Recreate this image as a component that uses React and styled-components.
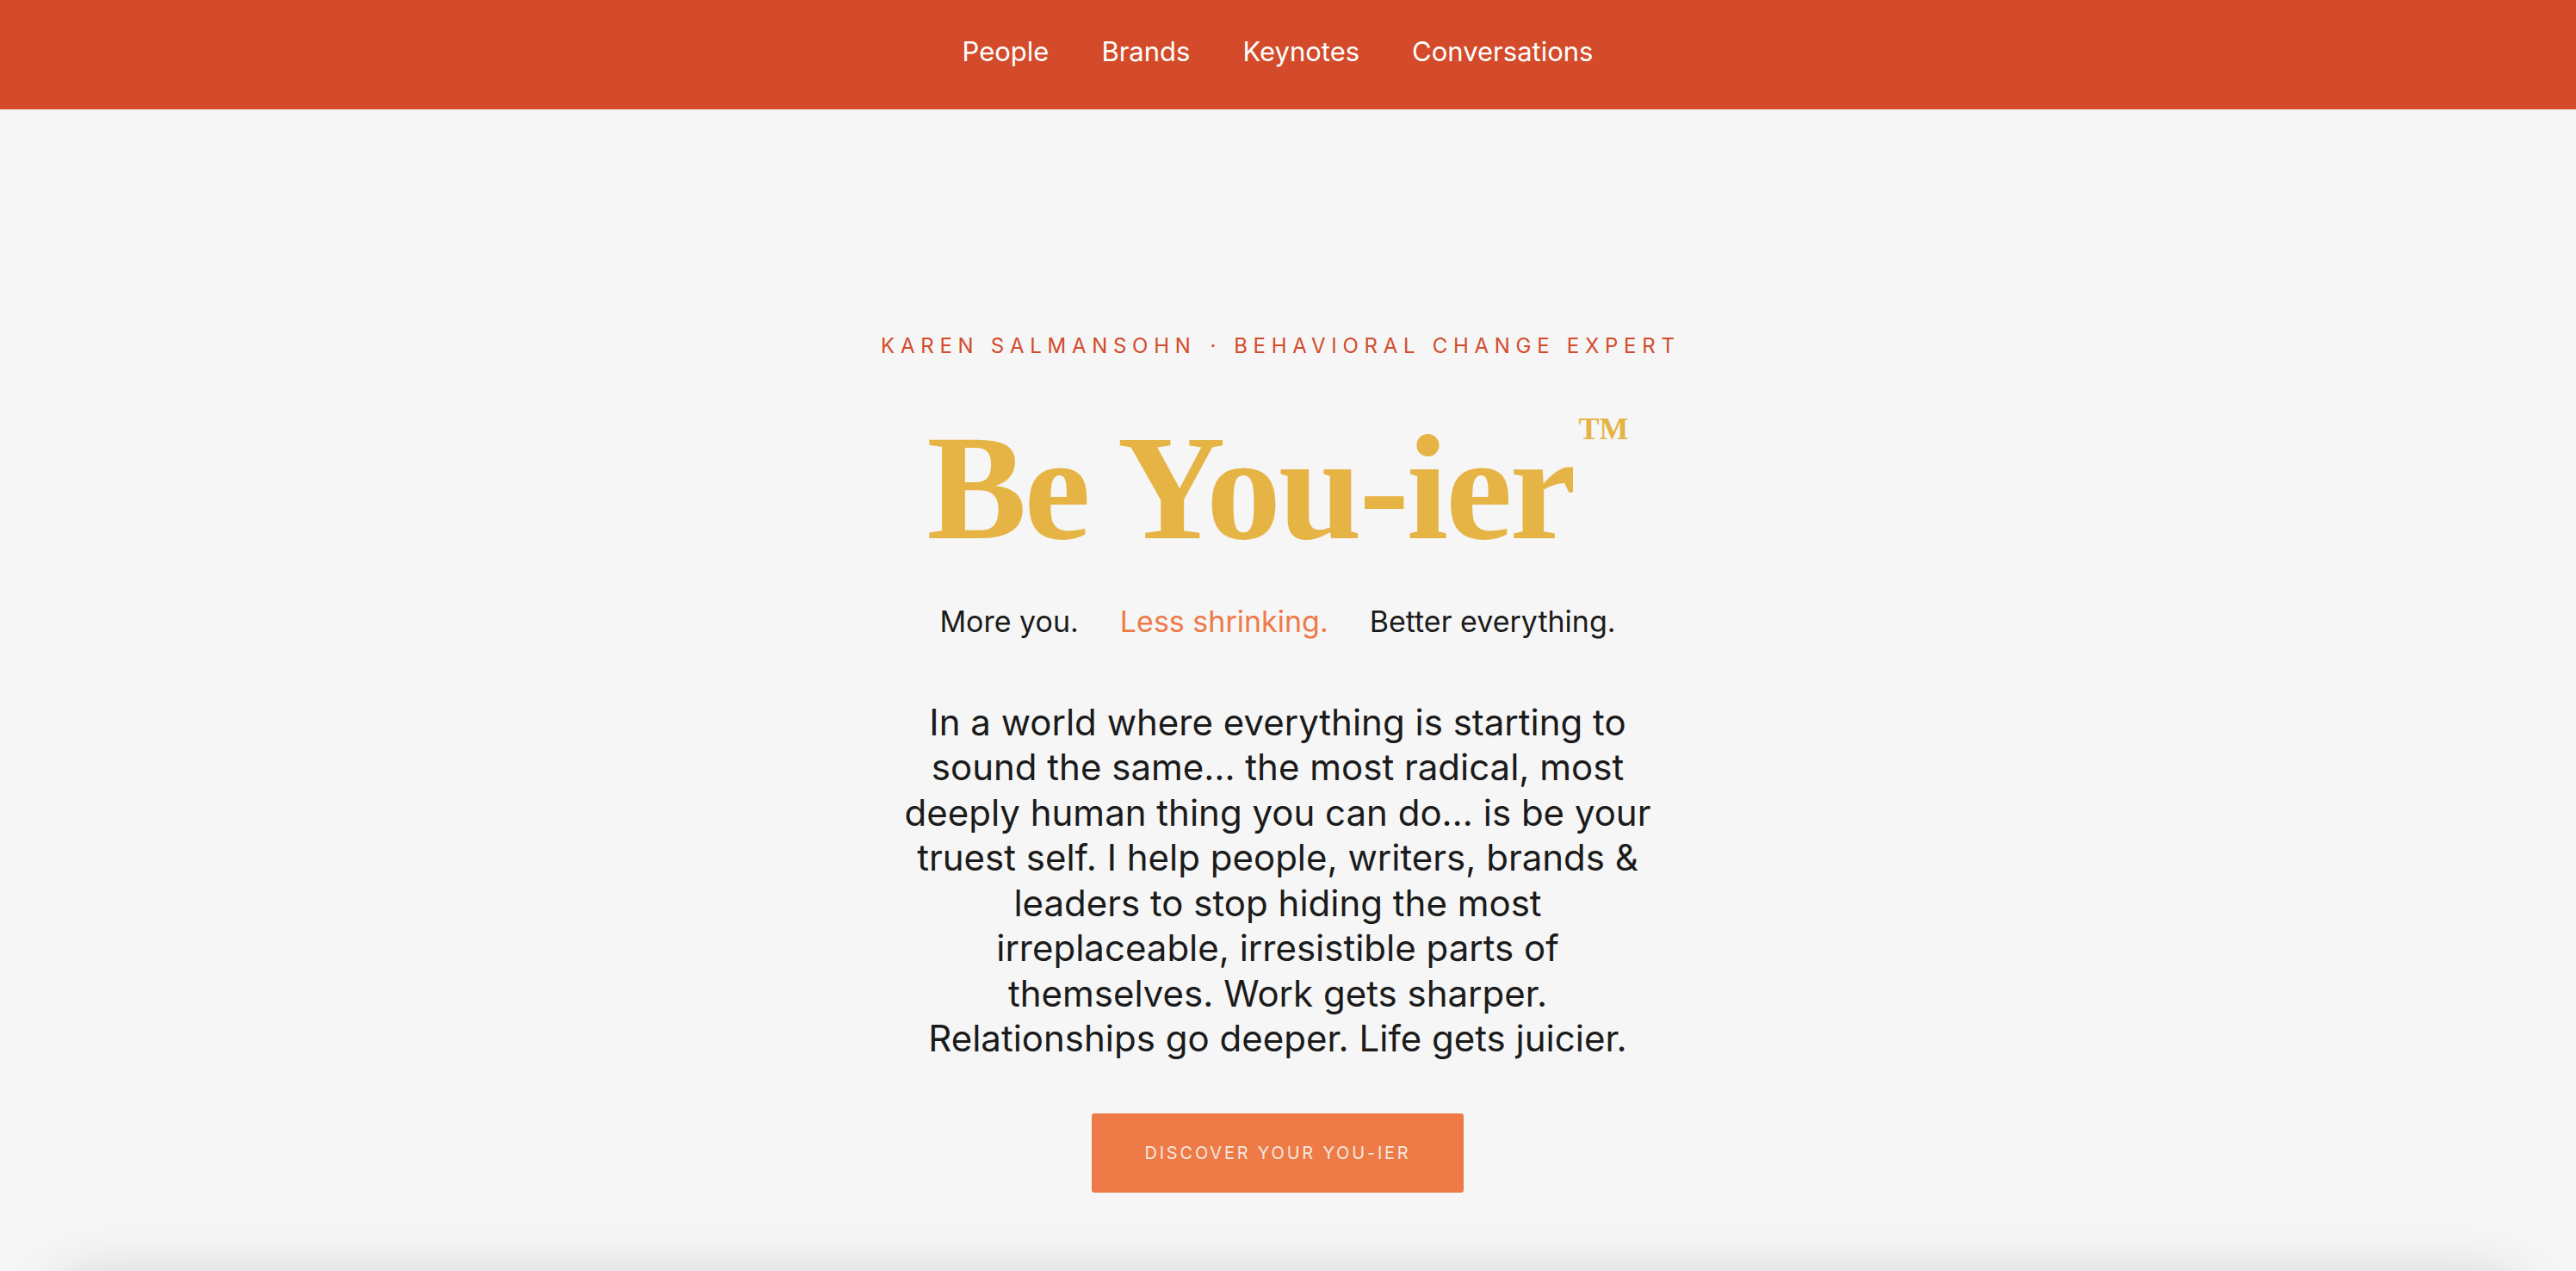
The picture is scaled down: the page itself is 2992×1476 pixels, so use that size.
import React from "react";
import styled, { createGlobalStyle } from "styled-components";

const GlobalStyle = createGlobalStyle`
  html, body {
    margin: 0;
    padding: 0;
    background: #f6f6f6;
    overflow: hidden;
  }
  body {
    font-family: Inter, "Noto Sans", "Liberation Sans", sans-serif;
    color: #1b1b1b;
  }
`;

const Page = styled.div`
  min-height: 100vh;
  background: #f6f6f6;
`;

const NavBar = styled.nav`
  height: 127px;
  background: #d34b2a;
  display: flex;
  justify-content: center;
  align-items: center;
  gap: 61px;
  padding-right: 24px;
  padding-bottom: 8px;
  box-sizing: border-box;
`;

const NavLink = styled.a`
  color: #ffffff;
  font-size: 31px;
  font-weight: 400;
  text-decoration: none;
  cursor: pointer;
`;

const Hero = styled.section`
  display: flex;
  flex-direction: column;
  align-items: center;
  padding: 263px 24px 0 0;
  text-align: center;
`;

const Eyebrow = styled.div`
  color: #d34b2a;
  font-size: 24px;
  letter-spacing: 0.28em;
  line-height: 1;
  text-transform: uppercase;
  margin-right: -0.28em;
`;

const Dot = styled.span`
  margin: 0 14px 0 16px;
`;

const Title = styled.h1`
  display: flex;
  align-items: flex-start;
  margin: 66px 0 0;
  color: #e5b445;
  font-family: "Liberation Serif", "DejaVu Serif", serif;
  font-weight: 700;
  font-size: 174px;
  line-height: 1;
  letter-spacing: -3px;
`;

const TradeMark = styled.span`
  font-size: 36px;
  letter-spacing: 0;
  margin: 0 0 0 6px;
  line-height: 1;
`;

const Tagline = styled.p`
  display: flex;
  gap: 48px;
  margin: 48px 0 0;
  font-size: 34px;
  line-height: 1.2;
`;

const Phrase = styled.span`
  color: ${(props) => (props.accent ? "#ee7a48" : "#1b1b1b")};
`;

const Lead = styled.p`
  margin: 70px 0 0;
  font-size: 42px;
  line-height: 52.5px;
  color: #1b1b1b;
`;

const CTAButton = styled.button`
  margin-top: 60px;
  width: 432px;
  height: 92px;
  border: none;
  border-radius: 3px;
  background: #ee7a48;
  color: #f5e8de;
  font-family: Inter, "Noto Sans", sans-serif;
  font-size: 20px;
  letter-spacing: 0.14em;
  text-transform: uppercase;
  cursor: pointer;
`;

const NextCard = styled.div`
  margin: 102px 60px 0;
  height: 400px;
  background: #f6f6f6;
  border-radius: 40px;
  box-shadow: 0 -10px 60px rgba(0, 0, 0, 0.13);
`;

const links = ["People", "Brands", "Keynotes", "Conversations"];

const leadLines = [
  "In a world where everything is starting to",
  "sound the same\u2026 the most radical, most",
  "deeply human thing you can do\u2026 is be your",
  "truest self. I help people, writers, brands &",
  "leaders to stop hiding the most",
  "irreplaceable, irresistible parts of",
  "themselves. Work gets sharper.",
  "Relationships go deeper. Life gets juicier.",
];

export default function App() {
  return (
    <Page>
      <GlobalStyle />
      <NavBar>
        {links.map((l) => (
          <NavLink key={l}>{l}</NavLink>
        ))}
      </NavBar>
      <Hero>
        <Eyebrow>
          Karen Salmansohn<Dot>·</Dot>Behavioral Change Expert
        </Eyebrow>
        <Title>
          Be You-ier<TradeMark>TM</TradeMark>
        </Title>
        <Tagline>
          <Phrase>More you.</Phrase>
          <Phrase accent>Less shrinking.</Phrase>
          <Phrase>Better everything.</Phrase>
        </Tagline>
        <Lead>
          {leadLines.map((line, i) => (
            <React.Fragment key={i}>
              {line}
              {i < leadLines.length - 1 && <br />}
            </React.Fragment>
          ))}
        </Lead>
        <CTAButton>Discover your You-ier</CTAButton>
      </Hero>
      <NextCard />
    </Page>
  );
}
